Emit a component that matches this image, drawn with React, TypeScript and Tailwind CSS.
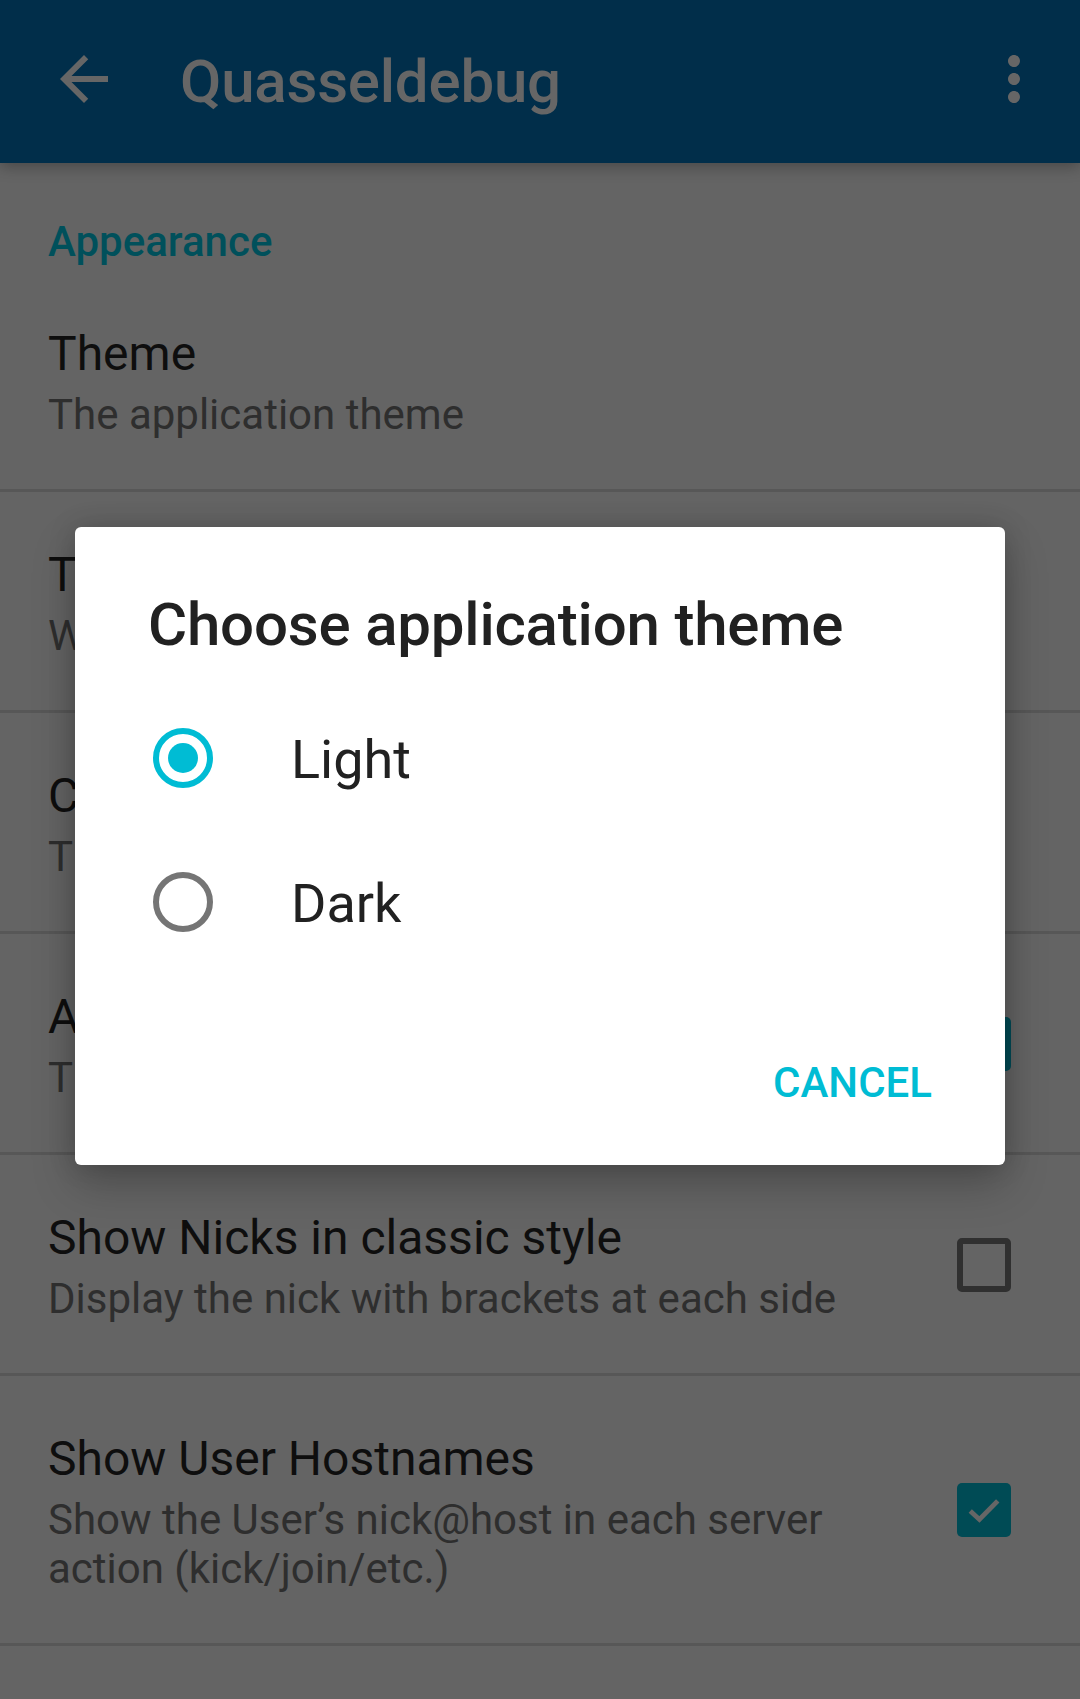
import React from "react";

const font = { fontFamily: "Roboto, 'Noto Sans', 'Liberation Sans', sans-serif" };

function Checkbox({ checked }: { checked: boolean }) {
  if (checked) {
    return (
      <div className="w-[54px] h-[54px] rounded-[5px] bg-[#004b55] flex items-center justify-center shrink-0">
        <svg width="44" height="44" viewBox="0 0 24 24">
          <path d="M4.5 12.5 L9.5 17.2 L19.5 7" fill="none" stroke="#666666" strokeWidth="2.6" />
        </svg>
      </div>
    );
  }
  return <div className="w-[54px] h-[54px] rounded-[5px] border-[6px] border-[#303030] shrink-0" />;
}

function Row({
  title,
  summary,
  widget,
}: {
  title: string;
  summary: string;
  widget?: React.ReactNode;
}) {
  return (
    <div className="border-b-[3px] border-[#575757]">
      <div className="flex items-center pl-[48px] pr-[69px] pt-[51px] pb-[50px]">
        <div className="flex-1 min-w-0">
          <div className="text-[48px] leading-[64px] text-[#0e0e0e] whitespace-nowrap">{title}</div>
          <div className="mt-[4px] text-[42px] leading-[49px] text-[#2e2e2e]">{summary}</div>
        </div>
        {widget ? <div className="ml-[48px]">{widget}</div> : null}
      </div>
    </div>
  );
}

function Radio({ checked }: { checked: boolean }) {
  return (
    <div
      className={
        "w-[60px] h-[60px] rounded-full border-[6px] flex items-center justify-center shrink-0 " +
        (checked ? "border-[#00bcd4]" : "border-[#757575]")
      }
    >
      {checked ? <div className="w-[30px] h-[30px] rounded-full bg-[#00bcd4]" /> : null}
    </div>
  );
}

export default function App() {
  return (
    <div className="relative w-[1080px] h-[1699px] overflow-hidden bg-[#646464]" style={font}>
      {/* App bar */}
      <div className="relative z-10 h-[163px] bg-[#012e4a] flex items-center shadow-[0_4px_14px_rgba(0,0,0,0.28)]">
        <svg className="ml-[48px] mb-[6px]" width="72" height="72" viewBox="0 0 24 24">
          <path d="M20 11H7.83l5.59-5.59L12 4l-8 8 8 8 1.41-1.41L7.83 13H20v-2z" fill="#666666" />
        </svg>
        <div className="ml-[60px] text-[60px] leading-[72px] font-medium tracking-[-0.2px] text-[#666666]">
          Quasseldebug
        </div>
        <div className="flex-1" />
        <svg className="mr-[30px] mb-[6px]" width="72" height="72" viewBox="0 0 24 24">
          <path
            d="M12 8c1.1 0 2-.9 2-2s-.9-2-2-2-2 .9-2 2 .9 2 2 2zm0 2c-1.1 0-2 .9-2 2s.9 2 2 2 2-.9 2-2-.9-2-2-2zm0 6c-1.1 0-2 .9-2 2s.9 2 2 2 2-.9 2-2-.9-2-2-2z"
            fill="#666666"
          />
        </svg>
      </div>

      {/* Preferences list */}
      <div>
        <div className="h-[108px] pl-[48px] pt-[51px]">
          <div className="text-[42px] leading-[56px] font-medium text-[#00505b]">Appearance</div>
        </div>
        <Row title="Theme" summary="The application theme" />
        <Row title="Text size" summary="Which size" />
        <Row title="Chat" summary="The format" />
        <Row title="Autocomplete" summary="The nick" widget={<Checkbox checked={true} />} />
        <Row
          title="Show Nicks in classic style"
          summary="Display the nick with brackets at each side"
          widget={<Checkbox checked={false} />}
        />
        <Row
          title="Show User Hostnames"
          summary="Show the User’s nick@host in each server action (kick/join/etc.)"
          widget={<Checkbox checked={true} />}
        />
      </div>

      {/* Dialog */}
      <div className="absolute z-20 left-[75px] top-[527px] w-[930px] h-[638px] bg-white rounded-[6px] shadow-[0_20px_44px_rgba(0,0,0,0.22),0_0_28px_rgba(0,0,0,0.16)]">
        <div className="pl-[73px] pt-[62px] text-[60px] leading-[72px] font-medium tracking-[-0.2px] text-[#212121]">
          Choose application theme
        </div>
        <div className="mt-[25px]">
          <div className="h-[144px] flex items-center pl-[78px]">
            <Radio checked={true} />
            <div className="ml-[78px] pt-[4px] text-[54px] leading-[64px] text-[#212121]">Light</div>
          </div>
          <div className="h-[144px] flex items-center pl-[78px]">
            <Radio checked={false} />
            <div className="ml-[78px] pt-[4px] text-[54px] leading-[64px] text-[#212121]">Dark</div>
          </div>
        </div>
        <div className="mt-[81px] flex justify-end pr-[73px]">
          <div className="text-[42px] leading-[56px] font-medium text-[#00bcd4]">CANCEL</div>
        </div>
      </div>
    </div>
  );
}
